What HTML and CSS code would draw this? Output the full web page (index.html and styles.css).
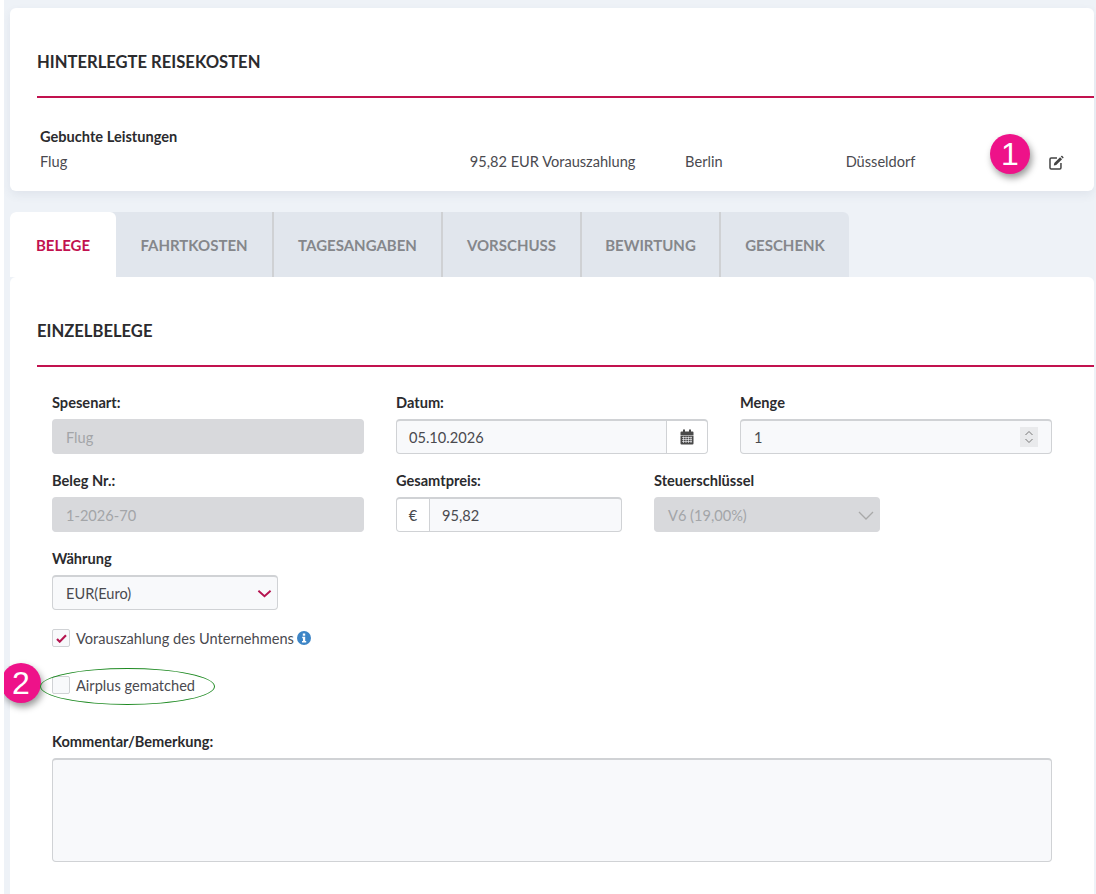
FILE: index.html
```html
<!DOCTYPE html>
<html lang="de">
<head>
    <meta charset="UTF-8">
    <title>Hinterlegte Reisekosten</title>
    <link rel="stylesheet" href="styles.css">
</head>
<body>
    <div class="page">
        <section class="card card-top">
            <h2 class="card-title">HINTERLEGTE REISEKOSTEN</h2>
            <div class="booked">
                <div class="booked-head">Gebuchte Leistungen</div>
                <div class="booked-row">
                    <span class="col-type">Flug</span>
                    <span class="col-price">95,82 EUR Vorauszahlung</span>
                    <span class="col-from">Berlin</span>
                    <span class="col-to">Düsseldorf</span>
                    <svg class="edit-icon" viewBox="0 0 16 16" width="16" height="16">
                        <path d="M9 3H3.2C2.5 3 2 3.500 2 4.200v8.600c0 .7.5 1.200 1.200 1.200h8.600c.7 0 1.200-.5 1.200-1.200V8" fill="none" stroke="#444" stroke-width="1.500"/>
                        <path d="M5.800 10.600l.5-2.500 5.800-5.800 2 2-5.800 5.800z" fill="#444"/>
                        <path d="M12.800 1.600l.6-.6c.3-.3.7-.3 1 0l1 1c.3.3.3.7 0 1l-.6.6z" fill="#444"/>
                    </svg>
                </div>
            </div>
        </section>

        <nav class="tabs">
            <a class="tab active">BELEGE</a>
            <a class="tab t2">FAHRTKOSTEN</a>
            <a class="tab t3">TAGESANGABEN</a>
            <a class="tab t4">VORSCHUSS</a>
            <a class="tab t5">BEWIRTUNG</a>
            <a class="tab t6">GESCHENK</a>
        </nav>

        <section class="card card-main">
            <h2 class="card-title">EINZELBELEGE</h2>
            <div class="form">
                <div class="form-row">
                    <div class="group wide">
                        <label>Spesenart:</label>
                        <div class="field disabled">Flug</div>
                    </div>
                    <div class="group wide">
                        <label>Datum:</label>
                        <div class="field split">
                            <span class="field-text">05.10.2026</span>
                            <span class="addon addon-right">
                                <svg viewBox="0 0 14 16" width="14" height="16">
                                    <rect x="3" y="0.500" width="2" height="3" fill="#4a4a4a"/>
                                    <rect x="9" y="0.500" width="2" height="3" fill="#4a4a4a"/>
                                    <path d="M0.500 3.500a1 1 0 0 1 1-1h11a1 1 0 0 1 1 1v2.500H0.500z" fill="#4a4a4a"/>
                                    <path d="M0.500 6.500h13v8a1 1 0 0 1-1 1h-11a1 1 0 0 1-1-1z" fill="#4a4a4a"/>
                                    <path d="M2 8.500h10M2 10.500h10M2 12.500h10M3.500 7.500v6.500M6 7.500v6.500M8.500 7.500v6.500M11 7.500v6.500" stroke="#f8f9fb" stroke-width="0.600"/>
                                </svg>
                            </span>
                        </div>
                    </div>
                    <div class="group wide">
                        <label>Menge</label>
                        <div class="field spin-field">
                            <span>1</span>
                            <span class="spinner">
                                <svg viewBox="0 0 14 18" width="14" height="18">
                                    <path d="M3.500 7L7 3.500 10.500 7M3.500 11L7 14.500 10.500 11" fill="none" stroke="#777" stroke-width="1"/>
                                </svg>
                            </span>
                        </div>
                    </div>
                </div>

                <div class="form-row">
                    <div class="group wide">
                        <label>Beleg Nr.:</label>
                        <div class="field disabled">1-2026-70</div>
                    </div>
                    <div class="group narrow">
                        <label>Gesamtpreis:</label>
                        <div class="field split">
                            <span class="addon addon-left">€</span>
                            <span class="field-text">95,82</span>
                        </div>
                    </div>
                    <div class="group narrow">
                        <label>Steuerschlüssel</label>
                        <div class="field disabled select">
                            <span>V6 (19,00%)</span>
                            <svg viewBox="0 0 16 9" width="16" height="9">
                                <path d="M1 1l7 7 7-7" fill="none" stroke="#a9a9a9" stroke-width="1.300"/>
                            </svg>
                        </div>
                    </div>
                </div>

                <div class="form-row">
                    <div class="group narrow">
                        <label>Währung</label>
                        <div class="field select">
                            <span>EUR(Euro)</span>
                            <svg viewBox="0 0 16 9" width="15" height="9">
                                <path d="M1.500 1.500L8 7.500l6.500-6" fill="none" stroke="#b5134f" stroke-width="2"/>
                            </svg>
                        </div>
                    </div>
                </div>

                <div class="check-row first">
                    <span class="checkbox">
                        <svg viewBox="0 0 12 10" width="11" height="9">
                            <path d="M1 5.500l3 3 7-7" fill="none" stroke="#b5134f" stroke-width="2.400"/>
                        </svg>
                    </span>
                    <span>Vorauszahlung des Unternehmens</span>
                    <svg class="info-icon" viewBox="0 0 14 14" width="14" height="14">
                        <circle cx="7" cy="7" r="7" fill="#3d85c6"/>
                        <rect x="5.800" y="2.500" width="2.400" height="2.200" fill="#fff"/>
                        <path d="M5.200 5.800h3v4.200h1v1.400H5v-1.400h1V7.200h-.8z" fill="#fff"/>
                    </svg>
                </div>
                <div class="check-row second">
                    <span class="checkbox"></span>
                    <span>Airplus gematched</span>
                </div>

                <div class="group comment">
                    <label>Kommentar/Bemerkung:</label>
                    <div class="field textarea"></div>
                </div>
            </div>
        </section>
    </div>

    <!-- Markierungen aus der Doku -->
    <div class="badge badge-one">1</div>
    <div class="badge badge-two">2</div>
    <div class="ring"></div>
</body>
</html>
```

FILE: styles.css
```css
html, body {
    height: 100%;
}
body {
    margin: 0;
    height: 894px;
    overflow: hidden;
    position: relative;
    background-color: #eef2f7;
    border-left: 4px solid #fff;
    box-sizing: border-box;
    font-family: "Lato", "Noto Sans", sans-serif;
    font-size: 14.6px;
    color: #4a4a4f;
}
.page {
    padding: 8px 2px 0 6px;
}
.card {
    background-color: #fff;
    border-radius: 6px;
}
.card-top {
    height: 183px;
    box-shadow: 0 4px 10px rgba(60, 80, 110, 0.08);
}
.card-main {
    height: 640px;
}
.card-title {
    margin: 0 0 0 27px;
    height: 90px;
    box-sizing: border-box;
    line-height: 108px;
    font-size: 16.6px;
    font-weight: 700;
    color: #2b2b2e;
    border-bottom: 2px solid #c2124f;
}
.booked {
    padding: 30px 30px 0;
}
.booked-head {
    font-weight: 700;
    color: #2b2b2e;
    line-height: 18px;
    margin-bottom: 7px;
}
.booked-row {
    display: flex;
    align-items: center;
    line-height: 18px;
}
.col-type {
    width: 431px;
}
.col-price {
    width: 216px;
}
.col-from {
    width: 161px;
}
.col-to {
    width: 203px;
}
.edit-icon {
    margin-top: 2px;
}

.tabs {
    display: flex;
    width: 839px;
    height: 65px;
    margin-top: 21px;
    background-color: #e1e6ed;
    border-radius: 6px 6px 0 0;
}
.tab {
    display: flex;
    align-items: center;
    justify-content: center;
    font-size: 15px;
    font-weight: 700;
    color: #85878b;
    border-left: 2px solid #cfd1d4;
    box-sizing: border-box;
}
.tab.active {
    width: 106px;
    background-color: #fff;
    color: #c2124f;
    border-left: none;
    border-radius: 6px 6px 0 0;
}
.t2 {
    width: 156px;
    border-left: none;
}
.t3 {
    width: 169px;
}
.t4 {
    width: 139px;
}
.t5 {
    width: 139px;
}
.t6 {
    width: 130px;
}

.form {
    padding: 27px 42px 0;
}
.form-row {
    display: flex;
    gap: 32px;
    margin-bottom: 18px;
}
.group label {
    display: block;
    font-weight: 700;
    color: #2b2b2e;
    line-height: 18px;
    margin-bottom: 7px;
}
.wide {
    width: 312px;
}
.narrow {
    width: 226px;
}
.field {
    height: 35px;
    box-sizing: border-box;
    padding: 0 13px;
    display: flex;
    align-items: center;
    background-color: #f8f9fb;
    border: 1px solid #d0d2d5;
    border-top-width: 2px;
    border-radius: 4px;
}
.field.disabled {
    background-color: #d8d9dc;
    border-color: #d8d9dc;
    color: #a3a5a8;
}
.field.split {
    padding: 0;
}
.field-text {
    flex: 1;
    padding: 0 12px;
}
.addon {
    height: 100%;
    display: flex;
    align-items: center;
    justify-content: center;
    box-sizing: border-box;
}
.addon-right {
    width: 41px;
    border-left: 1px solid #d0d2d5;
    background-color: #fff;
    border-radius: 0 4px 4px 0;
}
.addon-left {
    width: 33px;
    border-right: 1px solid #d0d2d5;
    background-color: #fff;
    border-radius: 4px 0 0 4px;
}
.spin-field,
.select {
    justify-content: space-between;
}
.spin-field {
    padding-right: 4px;
}
.spinner {
    width: 18px;
    height: 20px;
    display: flex;
    align-items: center;
    justify-content: center;
    margin-right: 9px;
    background-color: #e9eaec;
}
.select {
    padding-right: 5px;
}

.check-row {
    display: flex;
    align-items: center;
    gap: 6px;
    height: 20px;
}
.check-row.first {
    margin-top: 0;
}
.check-row.second {
    margin-top: 27px;
}
.checkbox {
    width: 16px;
    height: 16px;
    display: flex;
    align-items: center;
    justify-content: center;
    background-color: #f8f9fb;
    border: 1px solid #d0d2d5;
    border-radius: 2px;
}
.info-icon {
    margin-left: -3px;
}
.comment {
    margin-top: 38px;
}
.textarea {
    height: 104px;
}

/* Markierungen */
.badge {
    position: absolute;
    width: 40px;
    height: 40px;
    border-radius: 50%;
    background-color: #ee1289;
    color: #fff;
    display: flex;
    align-items: center;
    justify-content: center;
    font-family: "Liberation Sans", sans-serif;
    font-size: 32px;
    box-shadow: 2px 4px 7px rgba(0, 0, 0, 0.4);
}
.badge-one {
    left: 986px;
    top: 134px;
}
.badge-two {
    left: -3px;
    top: 663px;
}
.ring {
    position: absolute;
    left: 36px;
    top: 668px;
    width: 175px;
    height: 37px;
    box-sizing: border-box;
    border: 1.500px solid #1e8a22;
    border-radius: 50%;
}
```
